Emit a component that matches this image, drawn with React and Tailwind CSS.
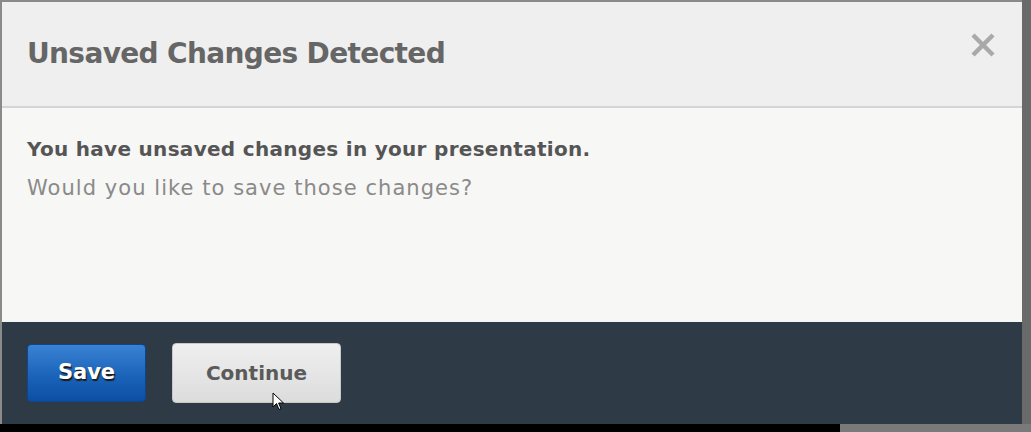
export default function App() {
  const font = { fontFamily: '"DejaVu Sans", "Liberation Sans", sans-serif' };
  return (
    <div className="w-[1031px] h-[432px] bg-black flex flex-col overflow-hidden" style={font}>
      <div className="flex h-[424px]">
        <div className="w-[1022px] h-full flex flex-col border-l-2 border-t-2 border-[#8a8a8a]">
          <div className="h-[106px] bg-[#efefef] border-b-2 border-[#d4d4d4] flex items-center justify-between pl-[25px] pr-[26px]">
            <h1 className="text-[28px] font-bold text-[#666666] tracking-[-0.65px] leading-none">Unsaved Changes Detected</h1>
            <svg width="26" height="26" viewBox="0 0 26 26" className="mt-[-18px]">
              <path d="M3 3 L23 23 M23 3 L3 23" stroke="#a9a9a9" strokeWidth="4.5" strokeLinecap="butt" />
            </svg>
          </div>
          <div className="h-[214px] bg-[#f7f7f5] pl-[25px] pt-[31px]">
            <p className="text-[20px] font-bold text-[#555555] leading-none tracking-[0.3px]">You have unsaved changes in your presentation.</p>
            <p className="text-[21px] text-[#8a8a8a] leading-none mt-[19px] tracking-[1.05px]">Would you like to save those changes?</p>
          </div>
          <div className="flex-1 bg-[#2e3a46] flex items-start pl-[25px] pt-[22px] gap-[26px] relative">
            <button className="w-[119px] h-[58px] rounded-[4px] bg-gradient-to-b from-[#3a82d2] via-[#1c66bc] to-[#0b4fa3] border border-[#0a478f] text-white text-[21px] font-bold [text-shadow:1px_2px_1px_#1a1a1a]">Save</button>
            <button className="w-[169px] h-[60px] mt-[-1px] rounded-[4px] bg-gradient-to-b from-[#efefef] to-[#dcdcdc] border border-[#c8c8c8] text-[#5a5a5a] text-[20px] font-bold">Continue</button>
            <svg width="14" height="20" viewBox="0 0 14 20" className="absolute left-[270px] top-[70px]">
              <path d="M1 1 L1 15 L4.5 11.5 L7 17.5 L9 16.6 L6.6 11 L11.5 11 Z" fill="#ffffff" stroke="#000000" strokeWidth="1" />
            </svg>
          </div>
        </div>
        <div className="flex-1 bg-[#6a6a6a]" />
      </div>
      <div className="flex flex-1">
        <div className="w-[840px] bg-black" />
        <div className="flex-1 bg-[#7a7a7a]" />
      </div>
    </div>
  );
}
